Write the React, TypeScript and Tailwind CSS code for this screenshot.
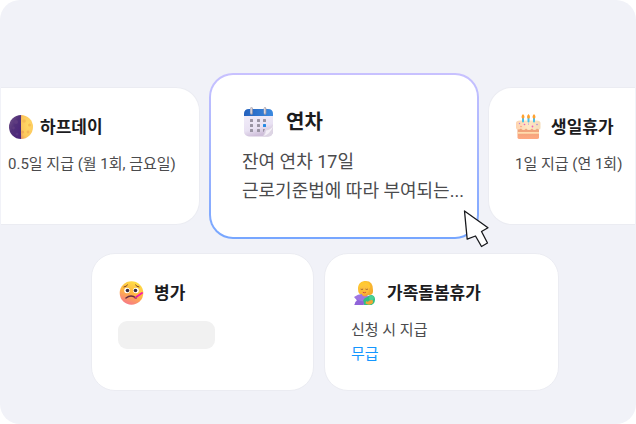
import type { ReactNode } from "react";

function HalfMoonIcon() {
  return (
    <svg viewBox="0 0 26 26" className="size-[26px] shrink-0" aria-hidden="true">
      <defs>
        <linearGradient id="moonDark" x1="0" x2="1" y1="0" y2="1">
          <stop offset="0" stopColor="#79598c" />
          <stop offset="0.45" stopColor="#513079" />
          <stop offset="1" stopColor="#49217c" />
        </linearGradient>
        <radialGradient id="moonLight" cx="0.6" cy="0.4" r="0.8">
          <stop offset="0" stopColor="#ffd966" />
          <stop offset="0.7" stopColor="#fcc65c" />
          <stop offset="1" stopColor="#e79a62" />
        </radialGradient>
      </defs>
      <path d="M13 1a12 12 0 0 0 0 24z" fill="url(#moonDark)" />
      <path d="M13 1a12 12 0 0 1 0 24z" fill="url(#moonLight)" />
      <circle cx="8" cy="8" r="2" fill="#5f3b80" />
      <circle cx="5.500" cy="14" r="1.400" fill="#5e3a7f" />
      <circle cx="9" cy="20" r="1.500" fill="#573481" />
      <circle cx="16" cy="7" r="1.800" fill="#f6bc55" />
      <circle cx="21.500" cy="11" r="1.500" fill="#f6bd55" />
      <circle cx="14.500" cy="18" r="1.600" fill="#f0ac57" />
      <circle cx="20" cy="18" r="1.400" fill="#f5b557" />
    </svg>
  );
}

function CalendarIcon() {
  return (
    <svg viewBox="0 0 32 30" className="h-[30px] w-8 shrink-0" aria-hidden="true">
      <defs>
        <linearGradient id="calHead" x1="0" x2="1">
          <stop offset="0" stopColor="#2361bd" />
          <stop offset="1" stopColor="#3c8ae0" />
        </linearGradient>
        <linearGradient id="calBody" x1="0" x2="0.3" y1="0" y2="1">
          <stop offset="0" stopColor="#f5f1fb" />
          <stop offset="0.75" stopColor="#e9e2f3" />
          <stop offset="1" stopColor="#cfbfda" />
        </linearGradient>
      </defs>
      <rect x="2" y="2" width="29" height="27.500" rx="5" fill="url(#calBody)" />
      <path d="M2 9V7q0-5 5-5h19q5 0 5 5v2z" fill="url(#calHead)" />
      <path d="M21 29.500 24 22q4-.5 7-4v6q0 5.500-5 5.500z" fill="#ddd5e4" />
      <path d="M20.500 29.500q3-1 3.500-6 5-.5 7-5-.3 4-4 7.500-3 3-6.500 3.500z" fill="#f4eff7" />
      <g fill="#9a94a3">
        <rect x="8" y="12" width="3" height="3" rx="0.500" />
        <rect x="15" y="12" width="3" height="3" rx="0.500" />
        <rect x="21" y="12" width="3" height="3" rx="0.500" />
        <rect x="8" y="17" width="3" height="3" rx="0.500" />
        <rect x="15" y="17" width="3" height="3" rx="0.500" />
        <rect x="8" y="22" width="3" height="3" rx="0.500" />
        <rect x="15" y="22" width="3" height="3" rx="0.500" />
      </g>
      <rect x="21" y="17" width="3" height="3" rx="0.500" fill="#2589e4" />
      <path d="M21 22h2l-1.500 3H21z" fill="#9a94a3" />
      <g strokeLinecap="round" fill="none">
        <path d="M9.500 1.500v5M23 1.500v5" stroke="#a39ba9" strokeWidth="2.600" />
        <path d="M9.200 1.500v4.500M22.700 1.500v4.500" stroke="#dcd6d9" strokeWidth="1.500" />
      </g>
    </svg>
  );
}

function CakeIcon() {
  return (
    <svg viewBox="0 0 26 26" className="size-[26px] shrink-0" aria-hidden="true">
      <defs>
        <linearGradient id="cakeBase" x1="0" x2="0" y1="0" y2="1">
          <stop offset="0" stopColor="#e9a078" />
          <stop offset="1" stopColor="#ffa981" />
        </linearGradient>
        <linearGradient id="cakeCream" x1="0" x2="1">
          <stop offset="0" stopColor="#ffd4b0" />
          <stop offset="0.5" stopColor="#ffe7c4" />
          <stop offset="1" stopColor="#f4dcb8" />
        </linearGradient>
      </defs>
      <path d="M2.500 13H24v10.500Q24 25 22 25H4.500q-2 0-2-1.500z" fill="url(#cakeBase)" />
      <path d="M2.500 18H24v1.800H2.500z" fill="#ffdcae" />
      <path
        d="M1 9q0-2.500 4-2.500h16.500q4 0 4 2.500v5q0 1.500-1.500 1.500-1.200 0-2-1-1 1.500-2.500 1.500T17 14.500q-1.200 1.500-3 1.500t-3-1.500q-1 1.500-2.500 1.500T6 14.500q-1 1-2.500 1Q1 15.500 1 14z"
        fill="url(#cakeCream)"
      />
      <path d="M8 4v3.500M13.500 4v3.500M19 4v3.500" stroke="#4cc0e8" strokeWidth="2" strokeLinecap="round" />
      <g fill="#ffa02c">
        <path d="M8 0q3 3.500 0 4.800Q5 3.500 8 0z" />
        <path d="M13.500 0q3 3.500 0 4.800-3-1.300 0-4.800z" />
        <path d="M19 0q3 3.500 0 4.800-3-1.300 0-4.800z" />
      </g>
      <g fill="#ed62b7">
        <circle cx="9.500" cy="10.500" r="0.800" />
        <circle cx="17.500" cy="12.500" r="0.900" />
      </g>
      <g fill="#b184dc">
        <circle cx="4.500" cy="9.500" r="0.700" />
        <circle cx="22" cy="10.500" r="0.800" />
        <circle cx="13.500" cy="10" r="0.600" />
      </g>
      <circle cx="6" cy="12.500" r="0.700" fill="#ff8b73" />
    </svg>
  );
}

function SickFaceIcon() {
  return (
    <svg viewBox="0 0 26 26" className="size-[26px] shrink-0" aria-hidden="true">
      <defs>
        <linearGradient id="sickFace" x1="0.75" x2="0.35" y1="0" y2="1">
          <stop offset="0" stopColor="#ffe345" />
          <stop offset="0.5" stopColor="#ffb842" />
          <stop offset="1" stopColor="#f77888" />
        </linearGradient>
      </defs>
      <circle cx="13.500" cy="13" r="11.800" fill="url(#sickFace)" />
      <circle cx="9" cy="10.500" r="2.800" fill="#fff" />
      <circle cx="18" cy="10.500" r="2.800" fill="#fff" />
      <circle cx="9.500" cy="10.500" r="1.800" fill="#35283d" />
      <circle cx="17.500" cy="10.500" r="1.800" fill="#35283d" />
      <g fill="none" strokeLinecap="round">
        <path d="M6 7Q8.500 6.500 9.500 5M21 7Q18.500 6.500 17.500 5" stroke="#7b3e28" strokeWidth="1" />
        <path d="M8 18q5-4 10 0" stroke="#642c42" strokeWidth="1.500" />
        <path d="m19 16.500 5-3.500" stroke="#f51cad" strokeWidth="2" />
        <path d="m16.800 18 2.200-1.500" stroke="#d42392" strokeWidth="1.200" />
      </g>
    </svg>
  );
}

function FamilyCareIcon() {
  return (
    <svg viewBox="0 0 26 26" className="size-[26px] shrink-0" aria-hidden="true">
      <defs>
        <linearGradient id="careHair" x1="0" x2="1" y1="0" y2="1">
          <stop offset="0" stopColor="#ffcb34" />
          <stop offset="1" stopColor="#f3a62c" />
        </linearGradient>
        <linearGradient id="careFace" x1="0" x2="0" y1="0" y2="1">
          <stop offset="0" stopColor="#ffcb42" />
          <stop offset="1" stopColor="#fbb336" />
        </linearGradient>
      </defs>
      <path d="M7 9C7 3.500 10 1 15 1q7 0 7 9 .5 4.500-3 5h-7Q7 15 7 9z" fill="url(#careHair)" />
      <path d="M3.500 25q0-3 2.500-5l-3-3q4-3 8-3l7 2 2 9z" fill="#9f76e2" />
      <path d="M11 12h6v3q-3 3-6 0z" fill="#f5a13b" />
      <ellipse cx="13.200" cy="8.800" rx="4.900" ry="6.200" fill="url(#careFace)" />
      <path d="M8 7.500Q13 6 15 3.500q.5 3 4 5Q20 2 14 2 8.500 2 8 7.500z" fill="#ffc932" />
      <g fill="none" strokeLinecap="round">
        <path d="M10 9.300q.9.600 1.800 0M14.800 9.300q.9.600 1.800 0" stroke="#9a5c30" strokeWidth="0.900" />
        <path d="M12.200 12.500q1.200.8 2.400 0" stroke="#d2503a" strokeWidth="1" />
      </g>
      <path d="M12 22q0-4 4.500-5 1-2 4-2 3.500.5 3.500 4.500 0 4-3.500 5.500h-7z" fill="#2fc184" />
      <circle cx="20.500" cy="18" r="2.400" fill="#4bd196" />
      <path d="M15 21q2 1.500 3.500-.5 2-1 3.500 0 .5 2.500-1.500 3.500-3 1.500-6-.5z" fill="#f2a636" />
      <path d="M3 17q4 4 10 4.500L12 25H3.500q0-2 3-4.500z" fill="#8f63d8" />
    </svg>
  );
}

function PointerIcon() {
  return (
    <svg
      viewBox="0 0 26 38"
      className="absolute -right-[10px] -bottom-[9px] z-10 h-[38px] w-[26px]"
      aria-hidden="true"
    >
      <path
        d="M1.500 1 25 17.700 18.500 21.500 24.500 33 18.500 36.500 12.500 26 4.200 29.200z"
        fill="white"
        stroke="#17181c"
        strokeWidth="1.300"
        strokeLinejoin="round"
      />
    </svg>
  );
}

type LeaveCardProps = {
  icon: ReactNode;
  title: string;
  className: string;
  headerGap?: string;
  children: ReactNode;
};

function LeaveCard({ icon, title, className, headerGap = "gap-2.5", children }: LeaveCardProps) {
  return (
    <article
      className={`min-h-[138px] min-w-0 border border-[#ebecf2] bg-white pt-[27px] pb-6 ${className}`}
    >
      <header className={`flex h-6 items-center ${headerGap}`}>
        {icon}
        <h2 className="text-[17px] leading-6 font-semibold whitespace-nowrap text-[#1c1c1e]">{title}</h2>
      </header>
      <div className="mt-[13px] text-[15px] leading-6 whitespace-nowrap text-[#4b4b4d]">{children}</div>
    </article>
  );
}

export default function App() {
  return (
    <main className="overflow-hidden rounded-[20px] bg-[#f1f2f8] pt-[73px] pb-[33px] font-['Roboto','Noto_Sans_CJK_KR',sans-serif]">
      <section className="grid grid-cols-[199fr_270fr_147fr] items-center gap-[9px] px-px">
        <LeaveCard
          icon={<HalfMoonIcon />}
          title="하프데이"
          className="rounded-r-[24px] border-l-0 pl-[7px]"
          headerGap="gap-1.5"
        >
          <p>0.5일 지급 (월 1회, 금요일)</p>
        </LeaveCard>

        <article className="relative min-w-0 rounded-[24px] bg-linear-to-b from-[#c8c1ff] to-[#76a6ff] p-[2px]">
          <div className="rounded-[22px] bg-white py-8 pr-3 pl-[31px]">
            <header className="flex h-[30px] items-center gap-3">
              <CalendarIcon />
              <h2 className="text-[20px] leading-[30px] font-semibold text-[#1c1c1e]">연차</h2>
            </header>
            <div className="mt-[10px] text-[18px] leading-[29px] whitespace-nowrap text-[#4b4b4d]">
              <p>잔여 연차 17일</p>
              <p>근로기준법에 따라 부여되는...</p>
            </div>
          </div>
          <PointerIcon />
        </article>

        <LeaveCard icon={<CakeIcon />} title="생일휴가" className="rounded-l-[24px] border-r-0 pl-[26px]">
          <p>1일 지급 (연 1회)</p>
        </LeaveCard>
      </section>

      <section className="mt-[14px] grid grid-cols-[223fr_235fr] gap-[10px] pr-[77px] pl-[91px]">
        <LeaveCard icon={<SickFaceIcon />} title="병가" className="rounded-[24px] px-[26px]">
          <div className="mt-4 h-7 w-[97px] rounded-[9px] bg-[#f1f1f1]" />
        </LeaveCard>

        <LeaveCard icon={<FamilyCareIcon />} title="가족돌봄휴가" className="rounded-[24px] px-[26px]">
          <p>신청 시 지급</p>
          <p className="text-[#1597ff]">무급</p>
        </LeaveCard>
      </section>
    </main>
  );
}
